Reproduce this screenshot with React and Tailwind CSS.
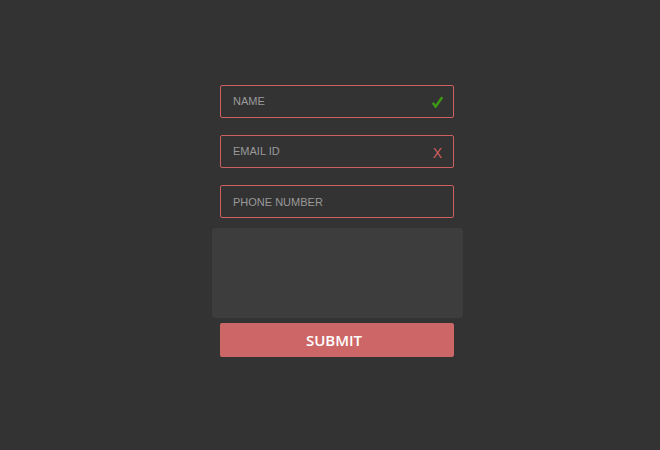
export default function App() {
  return (
    <div className="w-[660px] h-[450px] bg-[#333333] flex flex-col items-center pt-[85px] pl-[14px]" style={{ fontFamily: '"Liberation Sans", Arial, sans-serif' }}>
      <div className="w-[234px] h-[33px] border border-[#cc5f5f] rounded-[2px] flex items-center justify-between pl-[12px] pr-[10px]">
        <span className="text-[11px] text-[#9a9a9a]">NAME</span>
        <svg width="11" height="12" viewBox="0 0 11 12">
          <path d="M0.8 6.8 L3.6 10.6 L10.2 1.2" fill="none" stroke="#3c9a12" strokeWidth="2.4" strokeLinejoin="miter" />
        </svg>
      </div>
      <div className="mt-[17px] w-[234px] h-[33px] border border-[#cc5f5f] rounded-[2px] flex items-center justify-between pl-[12px] pr-[11px]">
        <span className="text-[11px] text-[#9a9a9a]">EMAIL ID</span>
        <span className="text-[14px] text-[#d05f5f] leading-none mt-[3px]">X</span>
      </div>
      <div className="mt-[17px] w-[234px] h-[33px] border border-[#cc5f5f] rounded-[2px] flex items-center pl-[12px] pt-[2px]">
        <span className="text-[11px] text-[#9a9a9a]">PHONE NUMBER</span>
      </div>
      <div className="mt-[10px] w-[251px] h-[90px] bg-[#3d3d3d] rounded-[3px]"></div>
      <button className="mt-[5px] w-[234px] h-[34px] bg-[#cd6767] rounded-[2px] text-white font-semibold text-[15px] pr-[6px]" style={{ fontFamily: '"Open Sans", sans-serif' }}>
        SUBMIT
      </button>
    </div>
  );
}
